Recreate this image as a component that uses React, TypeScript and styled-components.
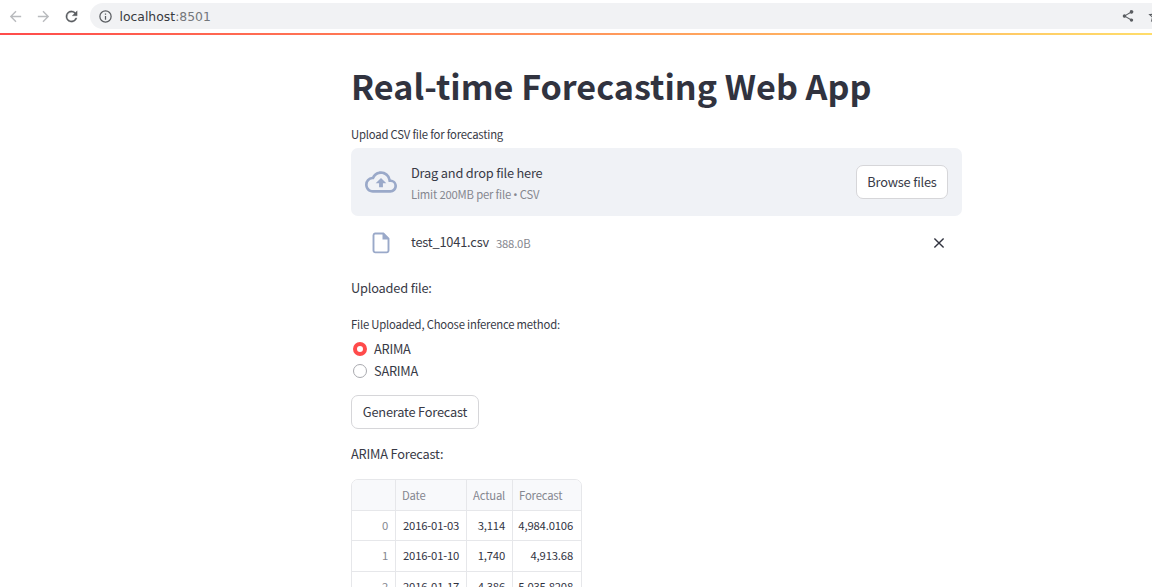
import React, { useState } from "react";
import styled, { createGlobalStyle } from "styled-components";

const GlobalStyle = createGlobalStyle`
  * { box-sizing: border-box; }
  html, body { margin: 0; background: #fff; overflow: hidden; }
  body { font-family: "Noto Sans CJK SC", "Noto Sans", sans-serif; color: #383a46; }
  button { font: inherit; color: inherit; cursor: pointer; }
`;

const Screen = styled.div`
  height: 587px;
  overflow: hidden;
  display: flex;
  flex-direction: column;
`;

const Toolbar = styled.header`
  flex: none;
  height: 33px;
  padding: 3px 0 4px 7px;
  display: flex;
  align-items: center;
  overflow: hidden;
`;

const NavButton = styled.button<{ $dim?: boolean }>`
  width: 28px;
  height: 26px;
  padding: 0;
  border: 0;
  background: none;
  display: flex;
  flex: none;
  align-items: center;
  color: ${(p) => (p.$dim ? "#b9bbbe" : "#5a5d61")};
`;

const AddressBar = styled.div`
  flex: none;
  width: 1100px;
  height: 26px;
  margin-left: -1px;
  padding-left: 8px;
  border-radius: 13px;
  background: #f1f2f4;
  display: flex;
  align-items: center;
  color: #5a5d61;
`;

const Url = styled.span`
  width: 1007.5px;
  flex: none;
  padding: 1px 0 0 6.5px;
  font: 12.4px/26px "DejaVu Sans", sans-serif;
  color: #37393d;
  span { color: #74777b; }
`;

const ShareSlot = styled.span`
  display: flex;
  width: 26px;
`;

const Decoration = styled.div`
  flex: none;
  height: 2px;
  background: linear-gradient(90deg, #ff4b4b, #ffdd6a);
`;

const Main = styled.main`
  width: 611px;
  margin-left: 351px;
  display: flex;
  flex-direction: column;
  align-items: flex-start;
`;

const Title = styled.h1`
  margin: 29px 0 0;
  font-size: 34.15px;
  font-weight: 700;
  line-height: 42px;
  white-space: nowrap;
  color: #31333f;
`;

const Label = styled.div<{ $top: number }>`
  margin-top: ${(p) => p.$top}px;
  font-size: 11.3px;
  letter-spacing: -0.2px;
  line-height: 16px;
`;

const Paragraph = styled.p<{ $top: number }>`
  margin: ${(p) => p.$top}px 0 0;
  font-size: 12.8px;
  letter-spacing: -0.19px;
  line-height: 20px;
`;

const Dropzone = styled.section`
  width: 611px;
  height: 68px;
  margin-top: 6px;
  padding: 0 14px;
  border-radius: 7px;
  background: #f0f2f6;
  display: flex;
  align-items: center;
`;

const DropText = styled.div`
  flex: 1;
  margin-left: 14px;
  padding-top: 2px;
  font-size: 12.8px;
  letter-spacing: -0.19px;
  line-height: 22px;
`;

const Muted = styled.div`
  font-size: 11.3px;
  letter-spacing: -0.2px;
  line-height: 20px;
  color: #85878f;
`;

const Bullet = styled.span`
  font-family: "Noto Sans", sans-serif;
`;

const Button = styled.button<{ $width: number }>`
  width: ${(p) => p.$width}px;
  height: 34px;
  padding: 0;
  border: 1px solid #d6d6d9;
  border-radius: 7px;
  background: #fff;
  font-size: 12.8px;
  letter-spacing: -0.19px;
  line-height: 20px;
`;

const FileRow = styled.div`
  width: 611px;
  height: 28px;
  margin-top: 13px;
  padding: 0 15px 0 21px;
  display: flex;
  align-items: center;
`;

const FileName = styled.span`
  margin: 0 0 2px 21px;
  font-size: 12.8px;
  letter-spacing: -0.19px;
  line-height: 20px;
`;

const FileSize = styled.span`
  flex: 1;
  margin-left: 7px;
  font-size: 11.3px;
  letter-spacing: -0.2px;
  line-height: 20px;
  color: #85878f;
`;

const CloseButton = styled.button`
  padding: 0;
  border: 0;
  background: none;
  display: flex;
`;

const RadioGroup = styled.div`
  margin: 6px 0 13px 2px;
`;

const RadioOption = styled.label`
  height: 22px;
  display: flex;
  align-items: center;
  gap: 7px;
  font-size: 12.8px;
  letter-spacing: -0.25px;
  line-height: 20px;
  cursor: pointer;
  input { appearance: none; margin: 0; width: 0; height: 0; position: absolute; }
`;

const RadioMark = styled.span<{ $on: boolean }>`
  width: 14px;
  height: 14px;
  border-radius: 50%;
  background: #fff;
  border: ${(p) => (p.$on ? "4.4px solid #ff4b4b" : "1px solid #a9aaaf")};
`;

const TableFrame = styled.div`
  width: 231px;
  margin-top: 15px;
  border: 1px solid #e6e7ea;
  border-radius: 7px;
  overflow: hidden;
`;

const Row = styled.div<{ $head?: boolean }>`
  display: grid;
  grid-template-columns: 44px 71px 46px 68px;
  height: ${(p) => (p.$head ? 31 : 30.3)}px;
  background: ${(p) => (p.$head ? "#f8f9fb" : "#fff")};
  border-bottom: 1px solid #e6e7ea;
`;

const Cell = styled.div<{ $muted?: boolean; $right?: boolean; $last?: boolean }>`
  padding: 0 ${(p) => (p.$last ? 8 : 7)}px 1px 6px;
  border-right: ${(p) => (p.$last ? "0" : "1px solid #e6e7ea")};
  display: flex;
  align-items: center;
  justify-content: ${(p) => (p.$right ? "flex-end" : "flex-start")};
  font-size: 11.3px;
  letter-spacing: -0.18px;
  line-height: 16px;
  white-space: nowrap;
  color: ${(p) => (p.$muted ? "#858790" : "#31333f")};
`;

const DateCell = styled(Cell)`
  padding-left: 7px;
  padding-right: 0;
`;

const rows = [
  ["2016-01-03", "3,114", "4,984.0106"],
  ["2016-01-10", "1,740", "4,913.68"],
  ["2016-01-17", "4,386", "5,035.8208"],
];

const Arrow = ({ flip }: { flip?: boolean }) => (
  <svg width="17" height="17" viewBox="0 0 24 24" fill="currentColor" transform={flip ? "scale(-1 1)" : undefined}>
    <path d="M20 11H7.83l5.59-5.59L12 4l-8 8 8 8 1.41-1.41L7.83 13H20v-2z" />
  </svg>
);

const Reload = () => (
  <svg width="17" height="17" viewBox="0 0 24 24" fill="currentColor" stroke="currentColor" strokeWidth=".4">
    <path d="M17.65 6.35A7.96 7.96 0 0 0 12 4a8 8 0 1 0 7.73 10h-2.08A6 6 0 1 1 12 6c1.66 0 3.14.69 4.22 1.78L13 11h7V4l-2.35 2.35z" />
  </svg>
);

const Info = () => (
  <svg width="15" height="15" viewBox="0 0 24 24" fill="currentColor">
    <path d="M11 7h2v2h-2zm0 4h2v6h-2zm1-9a10 10 0 1 0 0 20 10 10 0 0 0 0-20zm0 18a8 8 0 1 1 0-16 8 8 0 0 1 0 16z" />
  </svg>
);

const Share = () => (
  <svg width="14" height="14" viewBox="0 0 24 24" fill="currentColor">
    <path d="M18 16.08c-.76 0-1.44.3-1.96.77L8.91 12.7a3.3 3.3 0 0 0 0-1.4l7.05-4.11A3 3 0 1 0 15 5c0 .24.04.47.09.7L8.04 9.81a3 3 0 1 0 0 4.38l7.12 4.16c-.05.21-.08.43-.08.65a2.92 2.92 0 1 0 2.92-2.92z" />
  </svg>
);

const Star = () => (
  <svg width="16" height="16" viewBox="0 0 24 24" fill="currentColor">
    <path d="M22 9.24l-7.19-.62L12 2 9.19 8.63 2 9.24l5.46 4.73L5.82 21 12 17.27 18.18 21l-1.63-7.03L22 9.24zM12 15.4l-3.76 2.27 1-4.28-3.32-2.88 4.38-.38L12 6.1l1.71 4.04 4.38.38-3.32 2.88 1 4.28L12 15.4z" />
  </svg>
);

const CloudUpload = () => (
  <svg width="32" height="32" viewBox="0 0 24 24" fill="#9aa9c9">
    <path d="M19.35 10.04A7.49 7.49 0 0 0 12 4C9.11 4 6.6 5.64 5.35 8.04A5.994 5.994 0 0 0 0 14c0 3.31 2.69 6 6 6h13c2.76 0 5-2.24 5-5 0-2.64-2.05-4.78-4.65-4.96zM19 18H6c-2.21 0-4-1.79-4-4 0-2.05 1.53-3.76 3.56-3.97l1.07-.11.5-.95A5.47 5.47 0 0 1 12 6c2.62 0 4.88 1.86 5.39 4.43l.3 1.5 1.53.11A2.98 2.98 0 0 1 22 15c0 1.65-1.35 3-3 3zM8 13h2.55v3h2.9v-3H16l-4-4z" />
  </svg>
);

const FileIcon = () => (
  <svg width="18" height="22" viewBox="0 0 18 22">
    <path d="M3 1.5h8.3l5.2 5.2V18.6a1.8 1.8 0 0 1-1.8 1.8H3.3a1.8 1.8 0 0 1-1.8-1.8V3.3A1.8 1.8 0 0 1 3 1.5z" fill="none" stroke="#9aa9c9" strokeWidth="1.9" />
    <path d="M10.5 1h1.2L17 6.4v1.1h-6.5z" fill="#9aa9c9" />
  </svg>
);

const Close = () => (
  <svg width="16" height="16" viewBox="0 0 16 16">
    <path d="M3.4 3.4l9.2 9.2M12.6 3.4l-9.2 9.2" stroke="#31333f" strokeWidth="1.4" />
  </svg>
);

export default function App() {
  const [method, setMethod] = useState("ARIMA");
  return (
    <Screen>
      <GlobalStyle />
      <Toolbar>
        <NavButton $dim aria-label="Back"><Arrow /></NavButton>
        <NavButton $dim aria-label="Forward"><Arrow flip /></NavButton>
        <NavButton aria-label="Reload"><Reload /></NavButton>
        <AddressBar>
          <Info />
          <Url>localhost<span>:8501</span></Url>
          <ShareSlot><Share /></ShareSlot>
          <Star />
        </AddressBar>
      </Toolbar>
      <Decoration />
      <Main>
        <Title>Real-time Forecasting Web App</Title>
        <Label $top={20}>Upload CSV file for forecasting</Label>
        <Dropzone>
          <CloudUpload />
          <DropText>
            Drag and drop file here
            <Muted>Limit 200MB per file <Bullet>•</Bullet> CSV</Muted>
          </DropText>
          <Button $width={92}>Browse files</Button>
        </Dropzone>
        <FileRow>
          <FileIcon />
          <FileName>test_1041.csv</FileName>
          <FileSize>388.0B</FileSize>
          <CloseButton aria-label="Remove file"><Close /></CloseButton>
        </FileRow>
        <Paragraph $top={21}>Uploaded file:</Paragraph>
        <Label $top={18}>File Uploaded, Choose inference method:</Label>
        <RadioGroup role="radiogroup">
          {["ARIMA", "SARIMA"].map((m) => (
            <RadioOption key={m}>
              <input type="radio" name="method" checked={method === m} onChange={() => setMethod(m)} />
              <RadioMark $on={method === m} />
              {m}
            </RadioOption>
          ))}
        </RadioGroup>
        <Button $width={128}>Generate Forecast</Button>
        <Paragraph $top={15}>{method} Forecast:</Paragraph>
        <TableFrame>
          <Row $head>
            <Cell />
            <Cell $muted>Date</Cell>
            <Cell $muted>Actual</Cell>
            <Cell $muted $last>Forecast</Cell>
          </Row>
          {rows.map(([date, actual, forecast], i) => (
            <Row key={date}>
              <Cell $muted $right>{i}</Cell>
              <DateCell>{date}</DateCell>
              <Cell $right>{actual}</Cell>
              <Cell $right $last>{forecast}</Cell>
            </Row>
          ))}
        </TableFrame>
      </Main>
    </Screen>
  );
}
